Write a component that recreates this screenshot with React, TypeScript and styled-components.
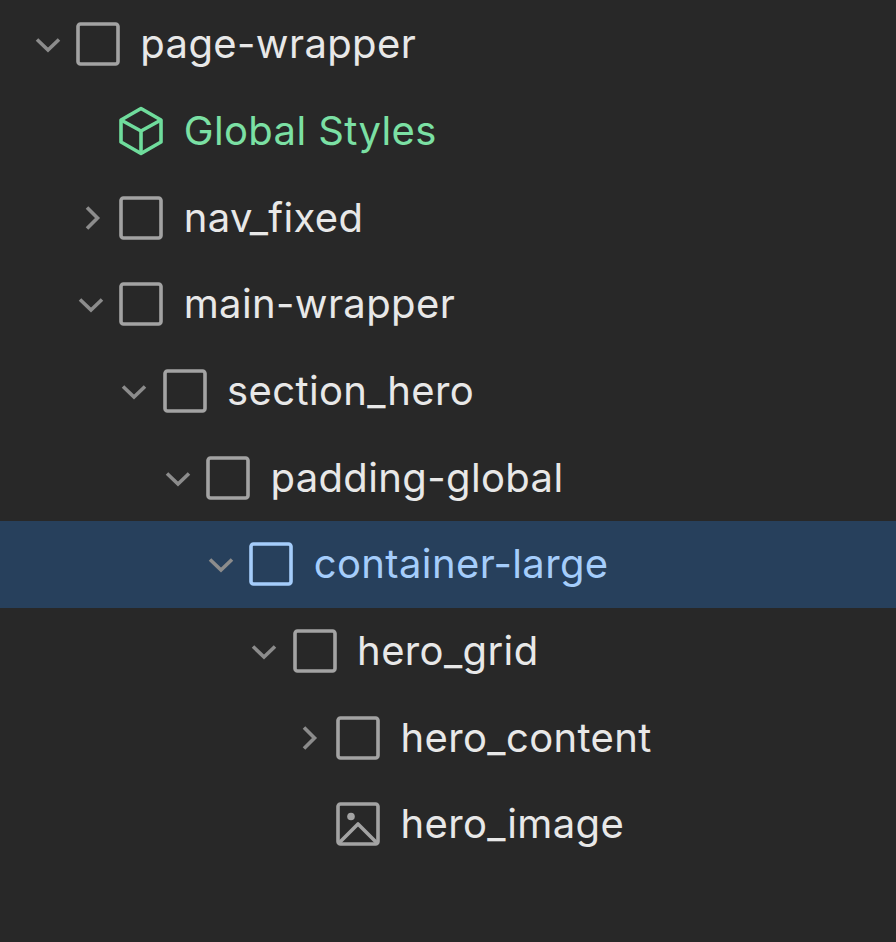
import styled, { createGlobalStyle } from 'styled-components';

const INDENT = 43.35;

const GlobalStyle = createGlobalStyle`
  html, body {
    margin: 0;
    padding: 0;
    background: #282828;
  }
`;

const Tree = styled.div`
  width: 896px;
  height: 942px;
  padding-top: 1px;
  box-sizing: border-box;
  background: #282828;
  font-family: Inter, 'Liberation Sans', sans-serif;
  overflow: hidden;
`;

const Row = styled.div<{ $selected?: boolean }>`
  display: flex;
  align-items: center;
  height: 86.67px;
  padding-left: 32.5px;
  background: ${({ $selected }) => ($selected ? '#27405c' : 'transparent')};
`;

const Indent = styled.div<{ $depth: number }>`
  flex-shrink: 0;
  width: ${({ $depth }) => $depth * INDENT}px;
`;

const CaretSlot = styled.div`
  display: flex;
  align-items: center;
  flex-shrink: 0;
  width: 43.35px;
  height: 100%;
  padding-left: 1px;
  box-sizing: border-box;
  color: #8c8c8c;
`;

const NodeIcon = styled.svg<{ $tone: Tone }>`
  flex-shrink: 0;
  width: 44px;
  height: 44px;
  overflow: visible;
  color: ${({ $tone }) => ICON_COLORS[$tone]};
`;

const Label = styled.span<{ $tone: Tone }>`
  margin-left: 20.5px;
  font-size: 40px;
  letter-spacing: 0.38px;
  line-height: 1;
  white-space: nowrap;
  color: ${({ $tone }) => TEXT_COLORS[$tone]};
`;

type Tone = 'default' | 'component' | 'selected';
type Kind = 'box' | 'component' | 'image';
type Caret = 'open' | 'closed' | null;

const ICON_COLORS: Record<Tone, string> = {
  default: '#a3a3a3',
  component: '#6fdc9c',
  selected: '#a5cdfb',
};

const TEXT_COLORS: Record<Tone, string> = {
  default: '#e8e8e8',
  component: '#7be0a4',
  selected: '#a5cdfb',
};

type Node = {
  name: string;
  depth: number;
  caret: Caret;
  kind: Kind;
  tone?: Tone;
};

const NODES: Node[] = [
  { name: 'page-wrapper', depth: 0, caret: 'open', kind: 'box' },
  { name: 'Global Styles', depth: 1, caret: null, kind: 'component', tone: 'component' },
  { name: 'nav_fixed', depth: 1, caret: 'closed', kind: 'box' },
  { name: 'main-wrapper', depth: 1, caret: 'open', kind: 'box' },
  { name: 'section_hero', depth: 2, caret: 'open', kind: 'box' },
  { name: 'padding-global', depth: 3, caret: 'open', kind: 'box' },
  { name: 'container-large', depth: 4, caret: 'open', kind: 'box', tone: 'selected' },
  { name: 'hero_grid', depth: 5, caret: 'open', kind: 'box' },
  { name: 'hero_content', depth: 6, caret: 'closed', kind: 'box' },
  { name: 'hero_image', depth: 6, caret: null, kind: 'image' },
];

function CaretIcon({ type }: { type: Caret }) {
  if (!type) return null;
  return (
    <svg width="28" height="28" viewBox="0 0 28 28" fill="none" stroke="currentColor" strokeWidth="3.6">
      {type === 'open' ? <path d="M3 9.5 L14 20 L25 9.5" /> : <path d="M10 3.5 L20.5 14 L10 24.5" />}
    </svg>
  );
}

function KindIcon({ kind, tone }: { kind: Kind; tone: Tone }) {
  return (
    <NodeIcon $tone={tone} viewBox="0 0 44 44" fill="none" stroke="currentColor" strokeWidth="3.6" strokeLinejoin="round">
      {kind === 'component' ? (
        <>
          <path d="M22 -0.5 L42 11 V33 L22 44.5 L2 33 V11 Z" />
          <path d="M2 11 L22 22 L42 11 M22 22 V44.5" />
        </>
      ) : (
        <rect x="2" y="2" width="40" height="40" rx="2.5" />
      )}
      {kind === 'image' && (
        <>
          <circle cx="15" cy="14.5" r="3.8" fill="currentColor" stroke="none" />
          <path d="M3 41 L22 22 L41 41" />
        </>
      )}
    </NodeIcon>
  );
}

export default function App() {
  return (
    <>
      <GlobalStyle />
      <Tree>
        {NODES.map(({ name, depth, caret, kind, tone = 'default' }) => (
          <Row key={name} $selected={tone === 'selected'}>
            <Indent $depth={depth} />
            <CaretSlot>
              <CaretIcon type={caret} />
            </CaretSlot>
            <KindIcon kind={kind} tone={tone} />
            <Label $tone={tone}>{name}</Label>
          </Row>
        ))}
      </Tree>
    </>
  );
}
